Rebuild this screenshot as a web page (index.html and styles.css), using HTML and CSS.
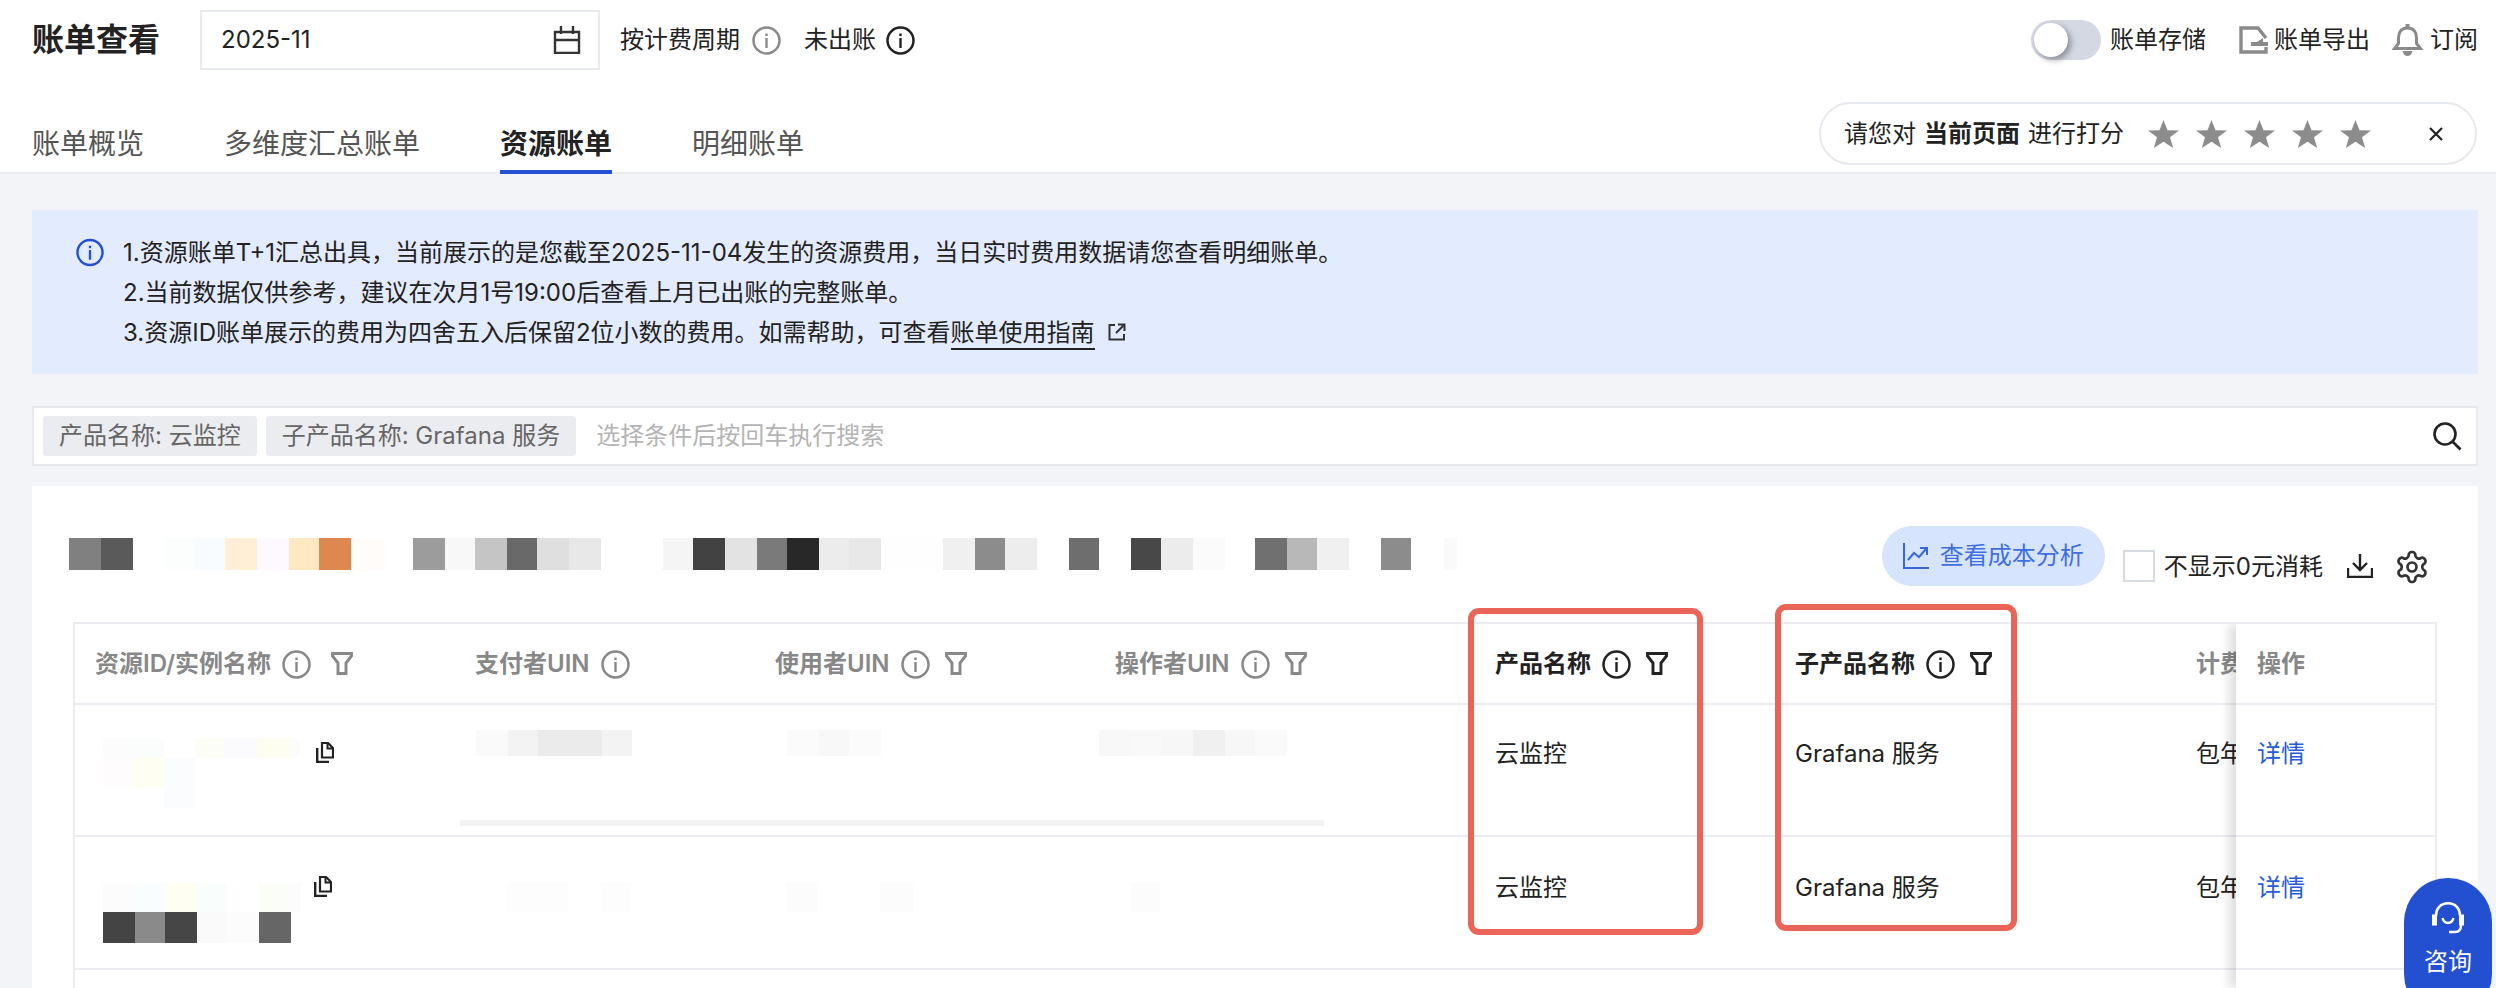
FILE: index.html
```html
<!DOCTYPE html>
<html lang="zh-CN">
<head>
<meta charset="utf-8">
<title>账单查看</title>
<link rel="stylesheet" href="styles.css">
</head>
<body>
<svg class="defs" width="0" height="0" aria-hidden="true">
  <symbol id="info" viewBox="0 0 29 29">
    <circle cx="14.5" cy="14.5" r="13" fill="none" stroke="currentColor" stroke-width="2.500"/>
    <rect x="13.300" y="12" width="2.400" height="10" fill="currentColor"/>
    <rect x="13.300" y="7.500" width="2.400" height="2.600" fill="currentColor"/>
  </symbol>
  <symbol id="filter" viewBox="0 0 22 23">
    <path d="M1.500 1.500h19v2.500l-5.500 7v10.500H7V11L1.500 4z" fill="none" stroke="currentColor" stroke-width="2.900"/>
  </symbol>
  <symbol id="star" viewBox="0 0 31 28">
    <polygon points="15.500,0 19.500,10.300 31,10.600 22,17.300 25.200,28 15.500,21.800 5.800,28 9,17.300 0,10.600 11.500,10.300" fill="currentColor"/>
  </symbol>
  <symbol id="copy" viewBox="0 0 18 21">
    <path d="M6 1h6l5 5v9.500H6z" fill="none" stroke="currentColor" stroke-width="2.200"/>
    <path d="M11.500 1v5.500H17" fill="none" stroke="currentColor" stroke-width="2"/>
    <path d="M1.200 6v14H13" fill="none" stroke="currentColor" stroke-width="2.400"/>
  </symbol>
</svg>

<header class="header">
  <div class="top">
    <h1 class="title">账单查看</h1>
    <div class="date">
      <span>2025-11</span>
      <svg class="cal" viewBox="0 0 28 28"><path d="M2 6h24v21H2zM2 14h24M8 0v8M20 0v8" fill="none" stroke="#333" stroke-width="2.400"/></svg>
    </div>
    <span class="cycle">按计费周期</span>
    <svg class="ico-info grey top-i1"><use href="#info"/></svg>
    <span class="unbilled">未出账</span>
    <svg class="ico-info dark top-i2"><use href="#info"/></svg>
    <div class="actions">
      <span class="toggle"><i class="knob"></i></span>
      <span class="lbl-store">账单存储</span>
      <svg class="ico-export" viewBox="0 0 29 28"><path d="M27 12L19 2H2v24h25v-5" fill="none" stroke="#8a8a8a" stroke-width="3.400"/><path d="M12 16h17v4H12zM18 16l6-4v4z" fill="#8a8a8a"/></svg>
      <span class="lbl-export">账单导出</span>
      <svg class="ico-bell" viewBox="0 0 31 32"><path d="M15.500 4c-6 0-9 4-9 10v5.500l-4 5h26l-4-5V14c0-6-3-10-9-10z" fill="none" stroke="#8a8a8a" stroke-width="3"/><path d="M13.500 0h4v4h-4zM10.500 27h10c-.5 3-2.700 5-5 5s-4.500-2-5-5z" fill="#8a8a8a"/></svg>
      <span class="lbl-sub">订阅</span>
    </div>
  </div>
  <div class="nav">
    <nav class="tabs">
      <a class="tab">账单概览</a>
      <a class="tab">多维度汇总账单</a>
      <a class="tab active">资源账单</a>
      <a class="tab">明细账单</a>
    </nav>
    <div class="rate">
      <span class="rate-text">请您对<b>当前页面</b>进行打分</span>
      <span class="stars">
        <svg class="star"><use href="#star"/></svg>
        <svg class="star"><use href="#star"/></svg>
        <svg class="star"><use href="#star"/></svg>
        <svg class="star"><use href="#star"/></svg>
        <svg class="star"><use href="#star"/></svg>
      </span>
      <svg class="close" viewBox="0 0 16 14"><path d="M2 1l12 12M14 1L2 13" fill="none" stroke="#222" stroke-width="2.200"/></svg>
    </div>
  </div>
</header>

<main class="main">
  <section class="alert">
    <svg class="alert-ico"><use href="#info"/></svg>
    <div class="alert-body">
      <p>1.资源账单T+1汇总出具，当前展示的是您截至2025-11-04发生的资源费用，当日实时费用数据请您查看明细账单。</p>
      <p>2.当前数据仅供参考，建议在次月1号19:00后查看上月已出账的完整账单。</p>
      <p>3.资源ID账单展示的费用为四舍五入后保留2位小数的费用。如需帮助，可查看<a class="guide">账单使用指南</a><svg class="ext" viewBox="0 0 18 18"><path d="M7 2H1.500v14.500H16V11M10 1.500h6.500V8M16.500 1.500L8 10" fill="none" stroke="#333" stroke-width="2"/></svg></p>
    </div>
  </section>

  <section class="search">
    <span class="tag">产品名称: 云监控</span>
    <span class="tag">子产品名称: Grafana 服务</span>
    <span class="placeholder">选择条件后按回车执行搜索</span>
    <svg class="search-ico" viewBox="0 0 30 30"><circle cx="13" cy="13" r="10.500" fill="none" stroke="#222" stroke-width="2.600"/><path d="M20.500 20.500l8 8" stroke="#222" stroke-width="2.600"/></svg>
  </section>

  <section class="card">
    <div class="toolbar">
      <svg class="mos-head" width="1388" height="32" shape-rendering="crispEdges">
        <rect x="0" width="32" height="32" fill="#808080"/><rect x="32" width="32" height="32" fill="#5a5a5a"/>
        <rect x="95" width="31" height="32" fill="#fbfefd"/><rect x="126" width="30" height="32" fill="#f9fcfe"/>
        <rect x="156" width="32" height="32" fill="#feefd6"/><rect x="188" width="32" height="32" fill="#fef9fe"/>
        <rect x="220" width="30" height="32" fill="#ffe8c2"/><rect x="250" width="32" height="32" fill="#dd884e"/>
        <rect x="282" width="32" height="32" fill="#fffcf9"/><rect x="344" width="32" height="32" fill="#9c9c9c"/>
        <rect x="376" width="30" height="32" fill="#f8f8f8"/><rect x="406" width="32" height="32" fill="#c5c5c5"/>
        <rect x="438" width="30" height="32" fill="#696969"/><rect x="468" width="32" height="32" fill="#dfdfdf"/>
        <rect x="500" width="32" height="32" fill="#e8e8e8"/><rect x="594" width="30" height="32" fill="#f5f5f5"/>
        <rect x="624" width="32" height="32" fill="#424242"/><rect x="656" width="32" height="32" fill="#e3e3e3"/>
        <rect x="688" width="30" height="32" fill="#7a7a7a"/><rect x="718" width="32" height="32" fill="#282828"/>
        <rect x="750" width="30" height="32" fill="#ececec"/><rect x="780" width="32" height="32" fill="#e8e8e8"/>
        <rect x="812" width="62" height="32" fill="#fefefe"/><rect x="874" width="32" height="32" fill="#f0f0f0"/>
        <rect x="906" width="30" height="32" fill="#8c8c8c"/><rect x="936" width="32" height="32" fill="#ededed"/>
        <rect x="1000" width="30" height="32" fill="#6e6e6e"/><rect x="1062" width="30" height="32" fill="#484848"/>
        <rect x="1092" width="32" height="32" fill="#ececec"/><rect x="1124" width="32" height="32" fill="#fbfbfb"/>
        <rect x="1186" width="32" height="32" fill="#707070"/><rect x="1218" width="30" height="32" fill="#b8b8b8"/>
        <rect x="1248" width="32" height="32" fill="#f0f0f0"/><rect x="1312" width="30" height="32" fill="#8c8c8c"/>
        <rect x="1375" width="13" height="32" fill="#fafafa"/>
      </svg>
      <div class="tools">
        <button class="analyse">
          <svg class="analyse-ico" viewBox="0 0 26 26"><path d="M1 0v25h25M5 17l6-7 5 4 7-8M17 5h7v7" fill="none" stroke="#3a66dc" stroke-width="2"/></svg>
          查看成本分析
        </button>
        <span class="check"></span>
        <span class="check-lbl">不显示0元消耗</span>
        <svg class="dl" viewBox="0 0 26 24"><path d="M13 0v15M6 9l7 7 7-7M1 14v9h24v-9" fill="none" stroke="#222" stroke-width="2.400"/></svg>
        <svg class="gear" viewBox="0 0 24 24"><path d="M12.220 2h-.44a2 2 0 0 0-2 2v.18a2 2 0 0 1-1 1.730l-.43.25a2 2 0 0 1-2 0l-.15-.08a2 2 0 0 0-2.730.73l-.22.38a2 2 0 0 0 .73 2.730l.15.1a2 2 0 0 1 1 1.720v.51a2 2 0 0 1-1 1.740l-.15.09a2 2 0 0 0-.73 2.730l.22.38a2 2 0 0 0 2.730.73l.15-.08a2 2 0 0 1 2 0l.43.25a2 2 0 0 1 1 1.730V20a2 2 0 0 0 2 2h.44a2 2 0 0 0 2-2v-.18a2 2 0 0 1 1-1.730l.43-.25a2 2 0 0 1 2 0l.15.08a2 2 0 0 0 2.730-.73l.22-.39a2 2 0 0 0-.73-2.730l-.15-.08a2 2 0 0 1-1-1.740v-.5a2 2 0 0 1 1-1.740l.15-.09a2 2 0 0 0 .73-2.730l-.22-.38a2 2 0 0 0-2.730-.73l-.15.08a2 2 0 0 1-2 0l-.43-.25a2 2 0 0 1-1-1.730V4a2 2 0 0 0-2-2z" fill="none" stroke="#333" stroke-width="1.800"/><circle cx="12" cy="12" r="3" fill="none" stroke="#333" stroke-width="1.800"/></svg>
      </div>
    </div>

    <div class="table">
      <div class="scroll">
        <div class="row head">
          <div class="cell"><span class="th">资源ID/实例名称</span><svg class="ico-info mid"><use href="#info"/></svg><svg class="ico-filter f-wide"><use href="#filter"/></svg></div>
          <div class="cell"><span class="th">支付者UIN</span><svg class="ico-info mid"><use href="#info"/></svg></div>
          <div class="cell"><span class="th">使用者UIN</span><svg class="ico-info mid"><use href="#info"/></svg><svg class="ico-filter"><use href="#filter"/></svg></div>
          <div class="cell"><span class="th">操作者UIN</span><svg class="ico-info mid"><use href="#info"/></svg><svg class="ico-filter"><use href="#filter"/></svg></div>
          <div class="cell on"><span class="th">产品名称</span><svg class="ico-info mid"><use href="#info"/></svg><svg class="ico-filter"><use href="#filter"/></svg></div>
          <div class="cell on"><span class="th">子产品名称</span><svg class="ico-info mid"><use href="#info"/></svg><svg class="ico-filter"><use href="#filter"/></svg></div>
          <div class="cell"><span class="th">计费模式</span></div>
        </div>
        <div class="row row-a">
          <div class="cell">
            <svg class="mos id" width="205" height="72" shape-rendering="crispEdges">
              <rect x="8" width="30" height="20" fill="#fcfcfc"/><rect x="38" width="31" height="20" fill="#fbfdfc"/><rect x="100" width="30" height="20" fill="#fdfdf8"/><rect x="130" width="32" height="20" fill="#fbfbfe"/><rect x="162" width="32" height="20" fill="#fdfef0"/><rect x="194" width="11" height="20" fill="#fcfcfc"/>
              <rect x="8" y="20" width="30" height="29" fill="#fffcfd"/><rect x="38" y="20" width="31" height="29" fill="#fefef3"/><rect x="69" y="20" width="31" height="50" fill="#fbfcfe"/>
            </svg>
            <svg class="copy"><use href="#copy"/></svg>
          </div>
          <div class="cell">
            <svg class="mos blur" width="158" height="26" shape-rendering="crispEdges"><rect x="1" width="32" height="26" fill="#fafafa"/><rect x="33" width="30" height="26" fill="#f3f3f3"/><rect x="63" width="64" height="26" fill="#ebebeb"/><rect x="127" width="30" height="26" fill="#f3f3f3"/></svg>
          </div>
          <div class="cell">
            <svg class="mos blur" width="106" height="26" shape-rendering="crispEdges"><rect x="12" width="32" height="26" fill="#fbfbfb"/><rect x="44" width="30" height="26" fill="#f8f8f8"/><rect x="74" width="32" height="26" fill="#fbfbfb"/></svg>
          </div>
          <div class="cell">
            <svg class="mos blur back" width="188" height="26" shape-rendering="crispEdges"><rect width="32" height="26" fill="#f8f8f8"/><rect x="32" width="30" height="26" fill="#f9f9f9"/><rect x="62" width="32" height="26" fill="#f7f7f7"/><rect x="94" width="32" height="26" fill="#f0f0f0"/><rect x="126" width="30" height="26" fill="#f7f7f7"/><rect x="156" width="32" height="26" fill="#fafafa"/></svg>
          </div>
          <div class="cell">云监控</div>
          <div class="cell">Grafana 服务</div>
          <div class="cell">包年包月</div>
          <i class="hbar"></i>
        </div>
        <div class="row row-b">
          <div class="cell">
            <svg class="mos id" width="207" height="60" shape-rendering="crispEdges">
              <rect x="8" width="32" height="29" fill="#fcfcfc"/><rect x="40" width="30" height="29" fill="#f9fdfe"/><rect x="70" width="32" height="29" fill="#fefef2"/><rect x="102" width="30" height="29" fill="#f9fdfc"/><rect x="164" width="32" height="29" fill="#fbfdf8"/><rect x="196" width="11" height="29" fill="#fcfcfc"/>
              <rect x="8" y="29" width="32" height="31" fill="#444444"/><rect x="40" y="29" width="30" height="31" fill="#8a8a8a"/><rect x="70" y="29" width="32" height="31" fill="#464646"/><rect x="102" y="29" width="30" height="31" fill="#fafafa"/><rect x="132" y="29" width="32" height="31" fill="#fcfcfc"/><rect x="164" y="29" width="32" height="31" fill="#666666"/>
            </svg>
            <svg class="copy"><use href="#copy"/></svg>
          </div>
          <div class="cell">
            <svg class="mos blur" width="157" height="30" shape-rendering="crispEdges"><rect x="32" width="61" height="30" fill="#fdfdfd"/><rect x="126" width="30" height="30" fill="#fdfdfd"/></svg>
          </div>
          <div class="cell">
            <svg class="mos blur" width="138" height="30" shape-rendering="crispEdges"><rect x="11" width="31" height="30" fill="#fcfcfc"/><rect x="105" width="33" height="30" fill="#fcfcfc"/></svg>
          </div>
          <div class="cell">
            <svg class="mos blur" width="46" height="30" shape-rendering="crispEdges"><rect x="16" width="29" height="30" fill="#fcfcfc"/></svg>
          </div>
          <div class="cell">云监控</div>
          <div class="cell">Grafana 服务</div>
          <div class="cell">包年包月</div>
        </div>
        <div class="row row-c"></div>
      </div>
      <div class="sticky">
        <div class="row head"><div class="cell"><span class="th">操作</span></div></div>
        <div class="row row-a"><div class="cell"><a class="link">详情</a></div></div>
        <div class="row row-b"><div class="cell"><a class="link">详情</a></div></div>
        <div class="row row-c"></div>
      </div>
      <i class="mark mark-1"></i>
      <i class="mark mark-2"></i>
    </div>
  </section>
</main>

<aside class="fab">
  <svg class="fab-ico" viewBox="0 0 32 32"><path d="M4 14C4 6 9 1.300 16 1.300S28 6 28 14" fill="none" stroke="#fff" stroke-width="2.600"/><path d="M0 12.500h5v11H0zM27 12.500h5v11h-5z" fill="#fff"/><path d="M29 23c0 4-1.800 7-6 7h-6" fill="none" stroke="#fff" stroke-width="2.400"/><path d="M10.500 16c1 3.500 3 5 5.500 5s4.500-1.500 5.500-5" fill="none" stroke="#fff" stroke-width="2.400"/></svg>
  <span>咨询</span>
</aside>
</body>
</html>
```

FILE: styles.css
```css
* { box-sizing: border-box; }
html, body { margin: 0; height: 988px; overflow: hidden; }
body {
  font-family: Inter, "Noto Sans CJK SC", sans-serif;
  font-size: 24px;
  line-height: 40px;
  color: #222;
  background: #f3f4f8;
}
p, h1 { margin: 0; }
.defs { position: absolute; }
svg { flex: none; display: block; }

.header { height: 174px; background: #fff; border-bottom: 2px solid #e9ebf1; }
.top { height: 80px; display: flex; align-items: center; padding: 0 18px 0 32px; }
.title { font-size: 32px; font-weight: 700; line-height: 40px; width: 128px; }
.date {
  width: 400px; height: 60px; margin-left: 40px; padding: 0 17px 0 19px;
  display: flex; align-items: center; justify-content: space-between;
  border: 2px solid #e7eaef;
}
.cal { width: 28px; height: 28px; }
.cycle { margin-left: 20px; }
.ico-info { width: 29px; height: 29px; }
.grey { color: #8a8a8a; }
.dark { color: #222; }
.top-i1 { margin-left: 12px; }
.unbilled { margin-left: 23px; }
.top-i2 { margin-left: 10px; }
.actions { margin-left: auto; display: flex; align-items: center; }
.toggle { width: 70px; height: 40px; padding: 3px; border-radius: 20px; background: #d3d8e3; }
.knob { display: block; width: 34px; height: 34px; border-radius: 50%; background: #fff; box-shadow: 3px 3px 6px rgba(0,0,0,.35); }
.lbl-store { margin-left: 9px; }
.ico-export { width: 29px; height: 28px; margin-left: 33px; }
.lbl-export { margin-left: 6px; }
.ico-bell { width: 31px; height: 32px; margin-left: 22px; }
.lbl-sub { margin-left: 7px; }

.nav { display: flex; align-items: flex-start; padding-right: 19px; }
.tabs { display: flex; gap: 80px; padding-left: 32px; }
.tab {
  height: 94px; padding: 44px 0 6px; font-size: 28px; line-height: 40px; color: #555;
  border-bottom: 4px solid transparent;
}
.tab.active { color: #222; font-weight: 700; border-bottom-color: #2350d0; }
.rate {
  margin: 22px 0 0 auto; width: 658px; height: 63px; padding: 0 31px 0 23px;
  display: flex; align-items: center; border: 2px solid #e7eaef; border-radius: 32px;
}
.rate-text b { margin: 0 8px; font-weight: 700; }
.stars { display: flex; gap: 17px; margin-left: 24px; }
.star { width: 31px; height: 28px; color: #8c8c8c; }
.close { width: 16px; height: 14px; margin-left: auto; }

.main { padding: 36px 18px 0 32px; }
.alert { height: 164px; padding: 23px 0 0 44px; display: flex; gap: 19px; background: #e3ebfe; }
.alert-ico { width: 28px; height: 29px; margin-top: 5px; color: #2350d0; }
.guide { border-bottom: 2px solid #222; display: inline-block; line-height: 30px; }
.ext { display: inline-block; width: 18px; height: 18px; margin-left: 13px; }

.search {
  height: 60px; margin-top: 32px; padding: 0 14px 0 9px; display: flex; align-items: center;
  background: #fff; border: 2px solid #e7e9ef;
}
.tag { height: 40px; padding: 0 16px; margin-right: 8px; border-radius: 3px; background: #ebecf0; color: #666; white-space: nowrap; }
.tag:first-child { margin-right: 9px; }
.placeholder { margin-left: 12px; color: #b4b4b4; }
.search-ico { width: 30px; height: 30px; margin-left: auto; }

.card { margin-top: 20px; height: 502px; padding: 40px 41px 0 37px; background: #fff; }
.toolbar { height: 96px; display: flex; align-items: flex-start; }
.mos-head { margin-top: 12px; }
.tools { margin-left: auto; display: flex; align-items: flex-start; }
.analyse {
  width: 223px; height: 60px; display: flex; align-items: center; justify-content: center; gap: 11px;
  padding: 0; border: 0; border-radius: 30px; background: #d6e5fd; color: #3f6fe0;
  font: inherit; line-height: 40px;
}
.analyse-ico { width: 26px; height: 26px; }
.check { width: 32px; height: 32px; margin: 24px 0 0 18px; border: 2px solid #d5dae3; background: #fff; }
.check-lbl { margin: 21px 0 0 9px; }
.dl { width: 26px; height: 24px; margin: 28px 0 0 24px; }
.gear { width: 36px; height: 36px; margin: 23px 7px 0 21px; }

.table {
  position: relative; margin-left: 4px; width: 2364px; height: 366px; display: flex;
  border: solid #ebecf1; border-width: 2px 2px 0;
}
.scroll { width: 2161px; overflow: hidden; flex: none; }
.sticky { width: 199px; flex: none; position: relative; background: #fff; box-shadow: -7px 0 10px rgba(0,0,0,.13); clip-path: inset(0 0 0 -24px); }
.row {
  position: relative; display: grid;
  grid-template-columns: 380px 300px 340px 380px 300px 401px 60px;
  border-bottom: 2px solid #ebecf1;
  white-space: nowrap;
}
.sticky .row { grid-template-columns: 1fr; }
.head { height: 81px; }
.row-a { height: 132px; }
.row-b { height: 133px; }
.row-c { border-bottom: 0; }
.cell { padding: 0 0 0 20px; display: flex; align-items: flex-start; overflow: hidden; }
.sticky .cell { padding-left: 21px; }
.head .cell { align-items: center; color: #888; }
.head .cell.on { color: #222; }
.th { font-weight: 600; }
.mid { margin-left: 11px; margin-top: 2px; }
.ico-filter { width: 22px; height: 23px; margin: 0 0 0 15px; }
.f-wide { margin-left: 20px; }
.row-a .cell { padding-top: 29px; }
.row-b .cell { padding-top: 31px; }
.blur.back { margin-left: -16px; }
.row-a .mos.id { margin-top: 4px; }
.row-a .mos.blur { margin-top: -4px; }
.row-b .mos.id { margin-top: 15px; }
.row-b .mos.blur { margin-top: 14px; }
.copy { width: 18px; height: 21px; color: #222; }
.row-a .copy { margin: 8px 0 0 16px; }
.row-b .copy { margin: 8px 0 0 12px; }
.link { color: #2a5bd7; }
.hbar { position: absolute; left: 385px; top: 115px; width: 864px; height: 6px; background: #f3f3f3; }

.mark { position: absolute; border: 6px solid #ea6557; border-radius: 11px; pointer-events: none; }
.mark-1 { left: 1393px; top: -16px; width: 235px; height: 327px; }
.mark-2 { left: 1700px; top: -20px; width: 242px; height: 327px; }

.fab {
  position: fixed; left: 2404px; top: 878px; width: 88px; height: 140px; padding-top: 24px;
  display: flex; flex-direction: column; align-items: center; gap: 8px;
  border-radius: 44px; background: #2350d0; color: #fff;
}
.fab-ico { width: 32px; height: 32px; }
```
